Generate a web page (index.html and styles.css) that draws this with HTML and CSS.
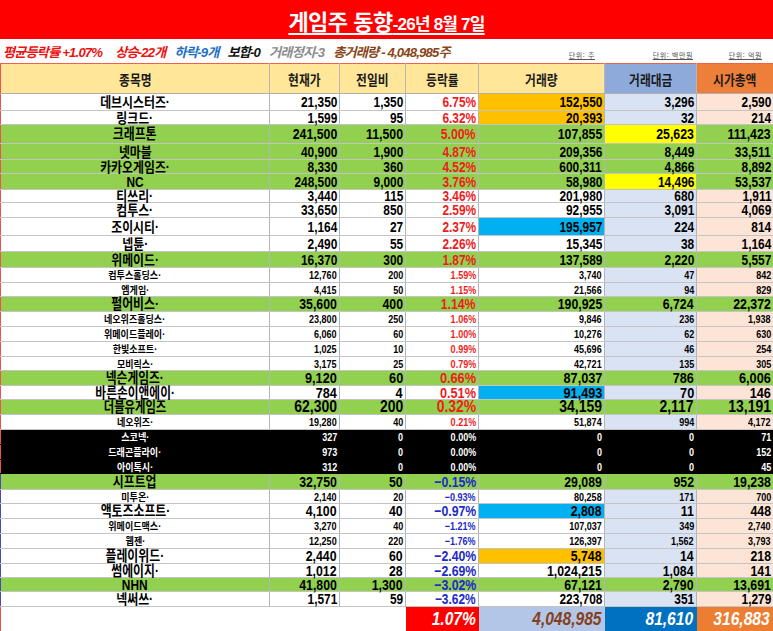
FILE: index.html
```html
<!DOCTYPE html>
<html lang="ko">
<head>
<meta charset="utf-8">
<title>게임주 동향</title>
<link rel="stylesheet" href="styles.css">
</head>
<body>
<div class="page">
  <div class="banner">
    <span class="title"><span class="t-main">게임주 동향</span><span class="t-date">-26년 8월 7일</span></span>
  </div>
  <div class="stats">
    <div class="stat-list">
      <span class="st red">평균등락률 +1.07%</span>
      <span class="st red wide">상승-22개</span>
      <span class="st blue">하락-9개</span>
      <span class="st black">보합-0</span>
      <span class="st gray">거래정지-3</span>
      <span class="st brown">총거래량 - 4,048,985주</span>
    </div>
    <div class="unit u1"><span>단위: 주</span></div>
    <div class="unit u2"><span>단위: 백만원</span></div>
    <div class="unit u3"><span>단위: 억원</span></div>
  </div>
  <table class="grid">
    <colgroup>
      <col class="c-nm"><col class="c-pr"><col class="c-df"><col class="c-pc"><col class="c-vo"><col class="c-am"><col class="c-mc">
    </colgroup>
    <thead>
      <tr class="head">
        <th><span>종목명</span></th><th><span>현재가</span></th><th><span>전일비</span></th><th><span>등락률</span></th><th><span>거래량</span></th><th class="ha"><span>거래대금</span></th><th class="hm"><span>시가총액</span></th>
      </tr>
    </thead>
    <tbody>
      <tr class="h17 b14"><td class="nm"><span>데브시스터즈·</span></td><td><span>21,350</span></td><td><span>1,350</span></td><td class="up"><span>6.75%</span></td><td class="ho"><span>152,550</span></td><td class="a"><span>3,296</span></td><td class="m"><span>2,590</span></td></tr>
      <tr class="h14 b14"><td class="nm"><span>링크드·</span></td><td><span>1,599</span></td><td><span>95</span></td><td class="up"><span>6.32%</span></td><td class="ho"><span>20,393</span></td><td class="a"><span>32</span></td><td class="m"><span>214</span></td></tr>
      <tr class="h19 b15 g"><td class="nm"><span>크래프톤</span></td><td><span>241,500</span></td><td><span>11,500</span></td><td class="up"><span>5.00%</span></td><td><span>107,855</span></td><td class="a hy"><span>25,623</span></td><td class="m"><span>111,423</span></td></tr>
      <tr class="h16 b14 g"><td class="nm"><span>넷마블</span></td><td><span>40,900</span></td><td><span>1,900</span></td><td class="up"><span>4.87%</span></td><td><span>209,356</span></td><td class="a"><span>8,449</span></td><td class="m"><span>33,511</span></td></tr>
      <tr class="h14 b14 g"><td class="nm"><span>카카오게임즈·</span></td><td><span>8,330</span></td><td><span>360</span></td><td class="up"><span>4.52%</span></td><td><span>600,311</span></td><td class="a"><span>4,866</span></td><td class="m"><span>8,892</span></td></tr>
      <tr class="h16 b14 g"><td class="nm"><span>NC</span></td><td><span>248,500</span></td><td><span>9,000</span></td><td class="up"><span>3.76%</span></td><td><span>58,980</span></td><td class="a hy"><span>14,496</span></td><td class="m"><span>53,537</span></td></tr>
      <tr class="h13 b14"><td class="nm"><span>티쓰리·</span></td><td><span>3,440</span></td><td><span>115</span></td><td class="up"><span>3.46%</span></td><td><span>201,980</span></td><td class="a"><span>680</span></td><td class="m"><span>1,911</span></td></tr>
      <tr class="h15 b14"><td class="nm"><span>컴투스·</span></td><td><span>33,650</span></td><td><span>850</span></td><td class="up"><span>2.59%</span></td><td><span>92,955</span></td><td class="a"><span>3,091</span></td><td class="m"><span>4,069</span></td></tr>
      <tr class="h18 b14"><td class="nm"><span>조이시티·</span></td><td><span>1,164</span></td><td><span>27</span></td><td class="up"><span>2.37%</span></td><td class="hb"><span>195,957</span></td><td class="a"><span>224</span></td><td class="m"><span>814</span></td></tr>
      <tr class="h16 b14"><td class="nm"><span>넵튠·</span></td><td><span>2,490</span></td><td><span>55</span></td><td class="up"><span>2.26%</span></td><td><span>15,345</span></td><td class="a"><span>38</span></td><td class="m"><span>1,164</span></td></tr>
      <tr class="h16 b14 g"><td class="nm"><span>위메이드·</span></td><td><span>16,370</span></td><td><span>300</span></td><td class="up"><span>1.87%</span></td><td><span>137,589</span></td><td class="a"><span>2,220</span></td><td class="m"><span>5,557</span></td></tr>
      <tr class="h15 sm"><td class="nm"><span>컴투스홀딩스·</span></td><td><span>12,760</span></td><td><span>200</span></td><td class="up"><span>1.59%</span></td><td><span>3,740</span></td><td class="a"><span>47</span></td><td class="m"><span>842</span></td></tr>
      <tr class="h14 sm"><td class="nm"><span>엠게임·</span></td><td><span>4,415</span></td><td><span>50</span></td><td class="up"><span>1.15%</span></td><td><span>21,566</span></td><td class="a"><span>94</span></td><td class="m"><span>829</span></td></tr>
      <tr class="h15 b15 g"><td class="nm"><span>펄어비스·</span></td><td><span>35,600</span></td><td><span>400</span></td><td class="up"><span>1.14%</span></td><td><span>190,925</span></td><td class="a"><span>6,724</span></td><td class="m"><span>22,372</span></td></tr>
      <tr class="h15 sm"><td class="nm"><span>네오위즈홀딩스·</span></td><td><span>23,800</span></td><td><span>250</span></td><td class="up"><span>1.06%</span></td><td><span>9,846</span></td><td class="a"><span>236</span></td><td class="m"><span>1,938</span></td></tr>
      <tr class="h15 sm"><td class="nm"><span>위메이드플레이·</span></td><td><span>6,060</span></td><td><span>60</span></td><td class="up"><span>1.00%</span></td><td><span>10,276</span></td><td class="a"><span>62</span></td><td class="m"><span>630</span></td></tr>
      <tr class="h15 sm"><td class="nm"><span>한빛소프트·</span></td><td><span>1,025</span></td><td><span>10</span></td><td class="up"><span>0.99%</span></td><td><span>45,696</span></td><td class="a"><span>46</span></td><td class="m"><span>254</span></td></tr>
      <tr class="h14 sm"><td class="nm"><span>모비릭스·</span></td><td><span>3,175</span></td><td><span>25</span></td><td class="up"><span>0.79%</span></td><td><span>42,721</span></td><td class="a"><span>135</span></td><td class="m"><span>305</span></td></tr>
      <tr class="h15 b16 g"><td class="nm"><span>넥슨게임즈·</span></td><td><span>9,120</span></td><td><span>60</span></td><td class="up"><span>0.66%</span></td><td><span>87,037</span></td><td class="a"><span>786</span></td><td class="m"><span>6,006</span></td></tr>
      <tr class="h14 b16"><td class="nm"><span>바른손이앤에이·</span></td><td><span>784</span></td><td><span>4</span></td><td class="up"><span>0.51%</span></td><td class="hb"><span>91,493</span></td><td class="a"><span>70</span></td><td class="m"><span>146</span></td></tr>
      <tr class="h15 b17 g"><td class="nm"><span>더블유게임즈</span></td><td><span>62,300</span></td><td><span>200</span></td><td class="up"><span>0.32%</span></td><td><span>34,159</span></td><td class="a"><span>2,117</span></td><td class="m"><span>13,191</span></td></tr>
      <tr class="h15 sm"><td class="nm"><span>네오위즈·</span></td><td><span>19,280</span></td><td><span>40</span></td><td class="up"><span>0.21%</span></td><td><span>51,874</span></td><td class="a"><span>994</span></td><td class="m"><span>4,172</span></td></tr>
      <tr class="h15 sm k kt"><td class="nm"><span>스코넥·</span></td><td><span>327</span></td><td><span>0</span></td><td><span>0.00%</span></td><td><span>0</span></td><td><span>0</span></td><td><span>71</span></td></tr>
      <tr class="h15 sm k"><td class="nm"><span>드래곤플라이·</span></td><td><span>973</span></td><td><span>0</span></td><td><span>0.00%</span></td><td><span>0</span></td><td><span>0</span></td><td><span>152</span></td></tr>
      <tr class="h14 sm k"><td class="nm"><span>아이톡시·</span></td><td><span>312</span></td><td><span>0</span></td><td><span>0.00%</span></td><td><span>0</span></td><td><span>0</span></td><td><span>45</span></td></tr>
      <tr class="h16 b15 g bt bl"><td class="nm"><span>시프트업</span></td><td><span>32,750</span></td><td><span>50</span></td><td class="dn"><span>−0.15%</span></td><td><span>29,089</span></td><td class="a"><span>952</span></td><td class="m"><span>19,238</span></td></tr>
      <tr class="h14 sm bl"><td class="nm"><span>미투온·</span></td><td><span>2,140</span></td><td><span>20</span></td><td class="dn"><span>−0.93%</span></td><td><span>80,258</span></td><td class="a"><span>171</span></td><td class="m"><span>700</span></td></tr>
      <tr class="h15 b15 bl"><td class="nm"><span>액토즈소프트·</span></td><td><span>4,100</span></td><td><span>40</span></td><td class="dn"><span>−0.97%</span></td><td class="hb"><span>2,808</span></td><td class="a"><span>11</span></td><td class="m"><span>448</span></td></tr>
      <tr class="h15 sm bl"><td class="nm"><span>위메이드맥스·</span></td><td><span>3,270</span></td><td><span>40</span></td><td class="dn"><span>−1.21%</span></td><td><span>107,037</span></td><td class="a"><span>349</span></td><td class="m"><span>2,740</span></td></tr>
      <tr class="h15 sm bl"><td class="nm"><span>웹젠·</span></td><td><span>12,250</span></td><td><span>220</span></td><td class="dn"><span>−1.76%</span></td><td><span>126,397</span></td><td class="a"><span>1,562</span></td><td class="m"><span>3,793</span></td></tr>
      <tr class="h15 b15 bl"><td class="nm"><span>플레이위드·</span></td><td><span>2,440</span></td><td><span>60</span></td><td class="dn"><span>−2.40%</span></td><td class="ho"><span>5,748</span></td><td class="a"><span>14</span></td><td class="m"><span>218</span></td></tr>
      <tr class="h14 b15 bl"><td class="nm"><span>썸에이지·</span></td><td><span>1,012</span></td><td><span>28</span></td><td class="dn"><span>−2.69%</span></td><td><span>1,024,215</span></td><td class="a"><span>1,084</span></td><td class="m"><span>141</span></td></tr>
      <tr class="h14 b15 g bl"><td class="nm"><span>NHN</span></td><td><span>41,800</span></td><td><span>1,300</span></td><td class="dn"><span>−3.02%</span></td><td><span>67,121</span></td><td class="a"><span>2,790</span></td><td class="m"><span>13,691</span></td></tr>
      <tr class="h15 b14 bl"><td class="nm"><span>넥써쓰·</span></td><td><span>1,571</span></td><td><span>59</span></td><td class="dn"><span>−3.62%</span></td><td><span>223,708</span></td><td class="a"><span>351</span></td><td class="m"><span>1,279</span></td></tr>
      <tr class="total">
        <td class="blank"></td><td class="blank"></td><td class="blank"></td>
        <td class="t-pc"><span>1.07%</span></td><td class="t-vo"><span>4,048,985</span></td><td class="t-am"><span>81,610</span></td><td class="t-mc"><span>316,883</span></td>
      </tr>
    </tbody>
  </table>
</div>
</body>
</html>
```

FILE: styles.css
```css
* {
  box-sizing: border-box;
}

html, body {
  margin: 0;
  padding: 0;
  background: #ffffff;
}

body {
  width: 773px;
  height: 631px;
  overflow: hidden;
  font-family: "Liberation Sans", "Noto Sans CJK KR", sans-serif;
  color: #000;
}

.page {
  width: 773px;
}

/* ---------- banner ---------- */
.banner {
  height: 39px;
  background: #ff0000;
  display: flex;
  align-items: center;
  justify-content: center;
  padding-top: 2px;
}

.title {
  color: #ffffff;
  font-weight: bold;
  line-height: 1;
  text-decoration: underline;
  text-decoration-thickness: 2px;
  text-underline-offset: 3px;
  white-space: nowrap;
}

.t-main {
  font-family: "Noto Sans CJK KR", sans-serif;
  font-size: 22px;
  letter-spacing: -0.5px;
}

.t-date {
  font-size: 17px;
  letter-spacing: -0.8px;
}

/* ---------- stats line ---------- */
.stats {
  height: 24px;
  display: flex;
}

.stat-list {
  width: 478px;
  display: flex;
  align-items: center;
  gap: 9px;
  padding-left: 3px;
  font-style: italic;
  font-weight: bold;
  font-size: 13.2px;
  white-space: nowrap;
  letter-spacing: -0.85px;
}

.st.wide { margin-left: 4px; }
.st.red { color: #ee1111; }
.st.blue { color: #1f6fc4; }
.st.black { color: #111111; }
.st.gray { color: #8c8c8c; }
.st.brown { color: #8a4418; }

.unit {
  display: flex;
  align-items: flex-end;
  justify-content: flex-end;
  padding-bottom: 4px;
  font-family: "Noto Sans CJK KR", serif;
  font-size: 7px;
  line-height: 1;
  color: #555;
  letter-spacing: 0.6px;
}

.unit span {
  text-decoration: underline;
}

.u1 { width: 126px; padding-right: 9px; }
.u2 { width: 92px; padding-right: 3px; }
.u3 { width: 77px; padding-right: 11px; }

/* ---------- table ---------- */
.grid {
  width: 773px;
  border-collapse: collapse;
  table-layout: fixed;
  border-left: 1px solid #f05050;
  border-right: 1px solid #f05050;
}

.c-nm { width: 269px; }
.c-pr { width: 70px; }
.c-df { width: 66px; }
.c-pc { width: 73px; }
.c-vo { width: 126px; }
.c-am { width: 92px; }
.c-mc { width: 77px; }

.grid th,
.grid td {
  padding: 0 2px 0 0;
  white-space: nowrap;
  overflow: visible;
  vertical-align: middle;
  line-height: 10px;
}

/* condensed rendering of cell text */
.grid td > span,
.grid th > span {
  display: inline-block;
  transform: scaleX(0.82);
  transform-origin: right center;
}

.grid td.nm > span,
.grid th > span {
  transform-origin: center center;
  transform: scaleX(var(--nx, 0.85));
}

.head {
  height: 30px;
}

.head th {
  background: #ffe699;
  border-top: 1px solid #f0604a;
  border-bottom: 1px solid #b0b0b0;
  border-right: 1px solid #b8b8b8;
  font-family: "Noto Sans CJK KR", sans-serif;
  font-size: 14px;
  font-weight: bold;
  color: #1a1a1a;
  text-align: center;
  padding: 0;
  --nx: 0.84;
}

.head th.ha { background: #8eaadb; }
.head th.hm { background: #ee7f3a; border-right: none; }

.grid td {
  text-align: right;
  font-weight: bold;
  border-bottom: 1px solid #c4c4c4;
  border-right: 1px solid #b4b4b4;
  background: #ffffff;
}

.grid td:last-child { border-right: none; }

.grid td.nm {
  text-align: center;
  padding: 0;
}

/* column tints */
.grid td.a { background: #dae3f3; }
.grid td.m { background: #fce4d6; }

/* row heights */
.h13 { height: 13px; }
.h14 { height: 14px; }
.h15 { height: 15px; }
.h16 { height: 16px; }
.h17 { height: 17px; }
.h18 { height: 18px; }
.h19 { height: 19px; }

/* row text sizes */
.b14 td { font-size: 14.5px; }
.b14 td.nm { font-size: 14px; --nx: 0.85; }
.b15 td { font-size: 15px; }
.b15 td.nm { font-size: 14.5px; --nx: 0.82; }
.b16 td { font-size: 15.5px; }
.b16 td.nm { font-size: 14.5px; --nx: 0.81; }
.b17 td { font-size: 17px; }
.b17 td.nm { font-size: 14.5px; --nx: 0.78; }
.sm td { font-size: 11px; }
.sm td.nm { font-size: 10.5px; --nx: 0.86; }

/* percent colours */
.grid td.up { color: #ee1c1c; }
.grid td.dn { color: #1c2bc8; }

/* green rows */
.grid tr.g td { background: #92d050; }

/* black rows */
.grid tr.k td {
  background: #000000;
  color: #ffffff;
  border-right-color: #000000;
  border-bottom-color: #000000;
}
.grid tr.kt td { border-top: 1px solid #e03030; }

/* lower block outline */
.grid tr.bt td { border-top: 1px solid #3f3fa8; }
.grid tr.bl td:first-child { border-left: 1px solid #4848b8; }

/* highlighted cells */
.grid tr td.ho { background: #ffc000; }
.grid tr td.hy { background: #ffff00; }
.grid tr td.hb { background: #00b0f0; }

/* totals */
.total {
  height: 25px;
}

.grid .total td {
  border-top: 1px solid #3f3fa8;
  border-bottom: 1px solid #f05050;
  border-right: none;
  font-style: italic;
  font-weight: bold;
  font-size: 19px;
  line-height: 12px;
  color: #ffffff;
  padding-right: 3px;
}

.grid .total td.blank { background: #ffffff; }
.grid .total td.t-pc { background: #ff0000; }
.grid .total td.t-vo { background: #b4c6e7; color: #84401c; }
.grid .total td.t-am { background: #0070c0; }
.grid .total td.t-mc { background: #ed7d31; }
```
